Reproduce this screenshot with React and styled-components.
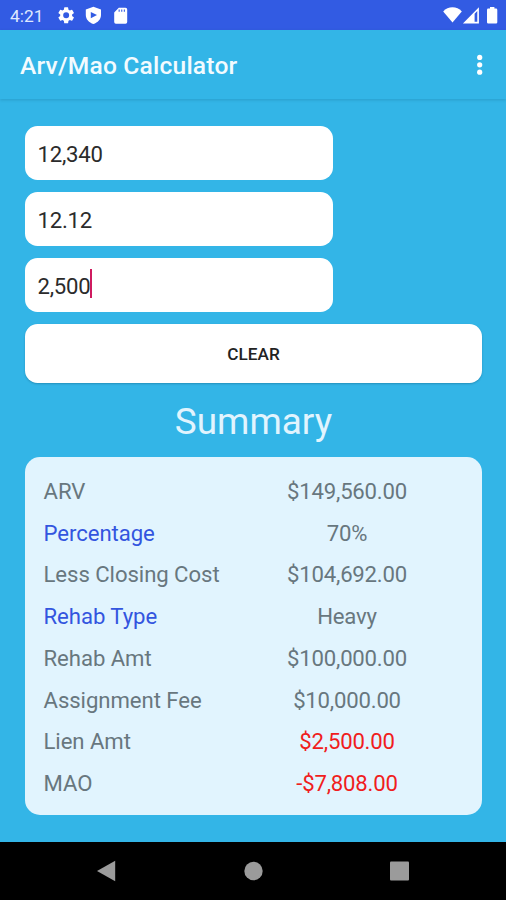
import React, { useState } from 'react';
import styled, { createGlobalStyle } from 'styled-components';

const Colors = {
  status: '#325be3',
  sky: '#33b5e7',
  card: '#e1f4fe',
  grey: '#68777e',
  blue: '#3355df',
  red: '#f01d20',
  cursor: '#cf1b5f',
  nav: '#9b9b9b',
};

const summary = [
  { label: 'ARV', value: '$149,560.00' },
  { label: 'Percentage', value: '70%', link: true },
  { label: 'Less Closing Cost', value: '$104,692.00' },
  { label: 'Rehab Type', value: 'Heavy', link: true },
  { label: 'Rehab Amt', value: '$100,000.00' },
  { label: 'Assignment Fee', value: '$10,000.00' },
  { label: 'Lien Amt', value: '$2,500.00', negative: true },
  { label: 'MAO', value: '-$7,808.00', negative: true },
];

const StatusBar = () => (
  <Status>
    <Clock>4:21</Clock>
    <StatusIcons>
      <svg width='84' height='30' viewBox='0 0 84 30' fill='#fff'>
        <path
          transform='translate(6.2 5.3) scale(0.83)'
          d='M19.14 12.94c.04-.3.06-.61.06-.94s-.02-.64-.07-.94l2.03-1.58a.49.49 0 0 0 .12-.61l-1.92-3.32a.49.49 0 0 0-.59-.22l-2.39.96a7 7 0 0 0-1.62-.94l-.36-2.54a.48.48 0 0 0-.48-.41h-3.84a.47.47 0 0 0-.47.41l-.36 2.54c-.59.24-1.13.57-1.62.94l-2.39-.96a.47.47 0 0 0-.59.22L2.74 8.87a.47.47 0 0 0 .12.61l2.03 1.58a6 6 0 0 0-.02 1.88l-2.03 1.58a.49.49 0 0 0-.12.61l1.92 3.32c.12.22.37.29.59.22l2.39-.96c.5.38 1.03.7 1.62.94l.36 2.54c.05.24.24.41.48.41h3.84c.24 0 .44-.17.47-.41l.36-2.54a6.8 6.8 0 0 0 1.62-.94l2.39.96c.22.08.47 0 .59-.22l1.92-3.32a.47.47 0 0 0-.12-.61zM12 15.6a3.6 3.6 0 1 1 0-7.2 3.6 3.6 0 0 1 0 7.2z'
        />
        <path
          fillRule='evenodd'
          d='M43.4 6.8 51 9.6V15c0 4.4-3.2 7.6-7.6 9-4.4-1.4-7.6-4.6-7.6-9V9.6zM40.8 12v6.2l6.2-3.1z'
        />
        <path
          fillRule='evenodd'
          d='M68.8 7.8H75.5a1.7 1.7 0 0 1 1.7 1.7V22a1.7 1.7 0 0 1-1.7 1.7H65.9A1.7 1.7 0 0 1 64.2 22V12.4zM68.6 9.6v2.2h1.1V9.6zM71.2 9.6v2.2h1.1V9.6zM73.8 9.6v2.2h1.1V9.6z'
        />
      </svg>
      <svg width='64' height='30' viewBox='0 0 64 30' fill='#fff'>
        <path d='M10.5 22.5 1.2 11.4C6 5.8 15 5.8 19.8 11.4z' />
        <path fillRule='evenodd' d='M36.9 7.2v16.2H20.9zM32.6 13.8v7.9h2.7V11z' />
        <path d='M48 7h4.4v1.6H54a1.3 1.3 0 0 1 1.3 1.3v12.3a1.3 1.3 0 0 1-1.3 1.3h-7.7a1.3 1.3 0 0 1-1.3-1.3V9.9a1.3 1.3 0 0 1 1.3-1.3H48z' />
      </svg>
    </StatusIcons>
  </Status>
);

const App = () => {
  const [fields] = useState(['12,340', '12.12', '2,500']);

  return (
    <Screen>
      <GlobalStyle />
      <StatusBar />
      <AppBar>
        <Title>Arv/Mao Calculator</Title>
        <svg width='8' height='24' viewBox='0 0 8 24' fill='#fff'>
          <circle cx='3.7' cy='4.4' r='2.6' />
          <circle cx='3.7' cy='11.8' r='2.6' />
          <circle cx='3.7' cy='19.2' r='2.6' />
        </svg>
      </AppBar>
      <Content>
        <Form>
          {fields.map((value, i) => (
            <Field key={value}>
              {value}
              {i === fields.length - 1 && <Cursor />}
            </Field>
          ))}
          <Clear>CLEAR</Clear>
        </Form>
        <Heading>Summary</Heading>
        <Card>
          {summary.map((row) => (
            <Row key={row.label}>
              <Label $link={row.link}>{row.label}</Label>
              <Value $negative={row.negative}>{row.value}</Value>
            </Row>
          ))}
        </Card>
      </Content>
      <NavBar>
        <svg width='22' height='24' viewBox='0 0 22 24' fill={Colors.nav}>
          <path d='M19.2 1.8v20.4L1 12z' />
        </svg>
        <svg width='22' height='24' viewBox='0 0 22 24' fill={Colors.nav}>
          <circle cx='11.5' cy='12' r='9.2' />
        </svg>
        <svg width='22' height='24' viewBox='0 0 22 24' fill={Colors.nav}>
          <rect x='1' y='2.5' width='19' height='19' rx='1' />
        </svg>
      </NavBar>
    </Screen>
  );
};

const GlobalStyle = createGlobalStyle`
  body {
    margin: 0;
    overflow: hidden;
    font-family: Roboto, sans-serif;
  }
`;

const Screen = styled.div`
  display: flex;
  flex-direction: column;
  width: 506px;
  height: 900px;
  background: ${Colors.sky};
`;

const Status = styled.header`
  display: flex;
  align-items: center;
  height: 30px;
  padding: 0 0 0 10px;
  box-sizing: border-box;
  background: ${Colors.status};
`;

const Clock = styled.span`
  width: 40px;
  padding-top: 1px;
  font-size: 17.4px;
  color: #dfe8ff;
`;

const StatusIcons = styled.div`
  display: flex;
  flex: 1;
  justify-content: space-between;

  svg {
    display: block;
  }
`;

const AppBar = styled.div`
  display: flex;
  align-items: center;
  justify-content: space-between;
  height: 69px;
  padding: 0 22px 0 20px;
  box-sizing: border-box;
  box-shadow: 0 1px 3px rgba(0, 60, 90, 0.2);
`;

const Title = styled.h1`
  margin: 2px 0 0;
  font-size: 24.6px;
  font-weight: 500;
  letter-spacing: 0.19px;
  color: #f2fbff;
`;

const Content = styled.main`
  flex: 1;
  padding: 26.5px 24px 0 25px;
`;

const Form = styled.div`
  display: flex;
  flex-direction: column;
  gap: 11.7px;
`;

const Field = styled.div`
  display: flex;
  align-items: center;
  width: 308px;
  height: 54.4px;
  padding: 2px 0 0 12.5px;
  box-sizing: border-box;
  border-radius: 12.5px;
  background: white;
  font-size: 22.15px;
  letter-spacing: -0.25px;
  color: #2b2b2b;
`;

const Cursor = styled.span`
  width: 2px;
  height: 29px;
  margin: -4px 0 0 -0.5px;
  background: ${Colors.cursor};
`;

const Clear = styled.button`
  height: 59.5px;
  padding: 2px 0 0;
  border: none;
  border-radius: 12.5px;
  background: white;
  box-shadow: 0 1px 2px rgba(0, 60, 90, 0.3);
  font-family: inherit;
  font-size: 17.2px;
  font-weight: 500;
  color: #222;
`;

const Heading = styled.h2`
  height: 73.5px;
  margin: 0;
  padding-top: 2px;
  box-sizing: border-box;
  font-size: 36.9px;
  font-weight: 400;
  line-height: 73px;
  text-align: center;
  color: ${Colors.card};
`;

const Card = styled.section`
  padding: 13.2px 18.5px 11.3px;
  border-radius: 15px;
  background: ${Colors.card};
`;

const Row = styled.div`
  display: grid;
  grid-template-columns: 183px 1fr;
  align-items: center;
  height: 41.75px;
  font-size: 22.15px;
`;

const Label = styled.span`
  white-space: nowrap;
  letter-spacing: -0.06px;
  color: ${(props) => (props.$link ? Colors.blue : Colors.grey)};
`;

const Value = styled.span`
  width: 241px;
  text-align: center;
  letter-spacing: -0.2px;
  color: ${(props) => (props.$negative ? Colors.red : Colors.grey)};
`;

const NavBar = styled.nav`
  display: flex;
  justify-content: center;
  gap: 124.5px;
  align-items: center;
  height: 58.5px;
  background: black;
`;

export default App;
